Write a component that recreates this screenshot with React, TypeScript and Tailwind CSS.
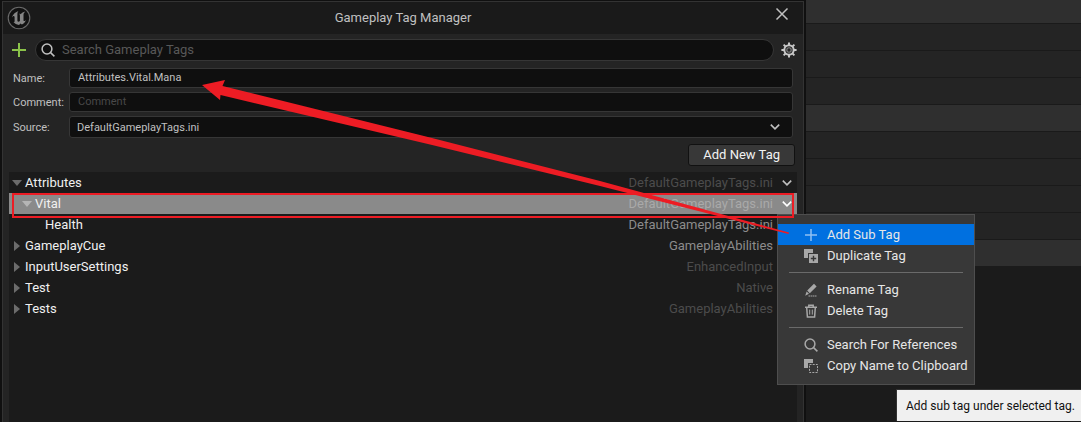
import type { ReactNode } from "react";

type Tag = {
  name: string;
  source: string;
  indent: string;
  arrow?: "open" | "closed";
  dim?: boolean;
  selected?: boolean;
  menu?: boolean;
};

const tags: Tag[] = [
  { name: "Attributes", source: "DefaultGameplayTags.ini", indent: "pl-0", arrow: "open", dim: true, menu: true },
  { name: "Vital", source: "DefaultGameplayTags.ini", indent: "pl-[10px]", arrow: "open", selected: true, menu: true },
  { name: "Health", source: "DefaultGameplayTags.ini", indent: "pl-5" },
  { name: "GameplayCue", source: "GameplayAbilities", indent: "pl-0", arrow: "closed" },
  { name: "InputUserSettings", source: "EnhancedInput", indent: "pl-0", arrow: "closed", dim: true },
  { name: "Test", source: "Native", indent: "pl-0", arrow: "closed", dim: true },
  { name: "Tests", source: "GameplayAbilities", indent: "pl-0", arrow: "closed", dim: true },
];

const backRows = [false, false, false, true, false, false, false, false, true];

function Chevron({ className }: { className?: string }) {
  return (
    <svg viewBox="0 0 12 8" className={`h-2 w-3 ${className ?? ""}`} fill="none" stroke="currentColor" strokeWidth="1.6">
      <path d="M1.8 1.6 6 5.8l4.2-4.2" />
    </svg>
  );
}

function Magnifier({ className }: { className: string }) {
  return (
    <svg viewBox="0 0 14 14" className={className} fill="none" stroke="currentColor" strokeWidth="1.5">
      <circle cx="6" cy="6" r="4.9" />
      <path d="m9.6 9.6 3.8 3.8" />
    </svg>
  );
}

function Gear() {
  const teeth = [0, 45, 90, 135, 180, 225, 270, 315];
  return (
    <svg viewBox="0 0 16 16" className="size-4 text-[#c8c8c8]" fill="none" stroke="currentColor">
      <circle cx="8" cy="8" r="4.7" strokeWidth="2" />
      <circle cx="8" cy="8" r="2.2" strokeWidth="1.1" className="text-[#808080]" />
      {teeth.map((a) => (
        <path key={a} d="M8 .4v2.8" strokeWidth="2" transform={`rotate(${a} 8 8)`} />
      ))}
    </svg>
  );
}

function UnrealLogo() {
  return (
    <svg viewBox="0 0 24 24" className="size-6">
      <circle cx="12" cy="12" r="10.8" fill="#111" stroke="#6a6a6a" strokeWidth="1.1" />
      <path
        fill="#858585"
        d="M11 5.2C8.3 6 5.8 8.3 4.8 11.7c.9-1.200 1.800-1.900 2.400-1.500.3.200.4.600.4 1.200v3.900c0 .7-.5.900-1.100.8 1.100 1.500 3.100 2.700 5.500 2.800l1.500-1.500 1.400 1.100c1.900-1 3.300-2.600 4-4.600-.8.800-1.500 1.200-2 1.200-.3-.1-.4-.3-.4-.8V8.800c0-1.200.9-2.500 1.800-3.200-2 .3-3.600 1.500-4.500 2.700-.4-.5-.9-.6-1.600-.6.500.4.700.9.700 1.500v5.700c-.5.500-1 .8-1.500.8-.8 0-1-.6-1-1.200V7.700c0-1.100.3-1.900 1-2.500Z"
      />
    </svg>
  );
}

const icons: Record<string, ReactNode> = {
  add: <path d="M7 1v12M1 7h12" stroke="currentColor" strokeWidth="1.5" />,
  duplicate: (
    <>
      <path d="M0 0h9v4H4v5H0z" fill="currentColor" />
      <path fillRule="evenodd" d="M5 5h9v9H5zM8.800 6.800v2h-2v1.400h2v2h1.400v-2h2V8.800h-2v-2z" fill="currentColor" />
    </>
  ),
  rename: (
    <>
      <path d="M3.200 7.600 10 .8l2.600 2.600-6.800 6.800zM2.600 8.400l2.400 2.400L1.200 12.800z" fill="currentColor" />
      <path d="M4.500 13h8.500" stroke="currentColor" strokeDasharray="1.500 .5" />
    </>
  ),
  remove: (
    <g fill="none" stroke="currentColor" strokeWidth="1.5">
      <path d="M1 3.200h12M4.800 3V1.200h4.400V3M2.700 3.500l.7 9.600h7.200l.7-9.600" />
      <path d="M5.700 5.600v5M8.300 5.600v5" strokeWidth="1" />
    </g>
  ),
  copy: (
    <>
      <path d="M0 0h9v4H4v5H0z" fill="currentColor" />
      <path d="M5.500 5.500h8v8h-8z" fill="none" stroke="currentColor" strokeDasharray="2 1.200" />
    </>
  ),
};

function MenuItem({ icon, label, active }: { icon: string; label: string; active?: boolean }) {
  return (
    <button
      type="button"
      role="menuitem"
      className={`flex h-[21px] w-full items-center gap-[9px] pl-[26px] text-left whitespace-nowrap text-[#e6e6e6] ${active ? "bg-[#0070e0]" : ""}`}
    >
      <span className={active ? "text-[#8fc0f2]" : "text-[#a8a8a8]"}>
        {icon === "search" ? (
          <Magnifier className="size-[14px]" />
        ) : (
          <svg viewBox="0 0 14 14" className="size-[14px]">
            {icons[icon]}
          </svg>
        )}
      </span>
      {label}
    </button>
  );
}

function Separator() {
  return <div role="separator" className="mx-[11px] my-[6px] h-px bg-[#6a6a6a]" />;
}

function TagRow({ tag }: { tag: Tag }) {
  const color = tag.selected ? "text-[#a9a9a9]" : tag.dim ? "text-[#4c4c4c]" : "text-[#8c8c8c]";
  return (
    <li className={`flex h-[21px] items-center pr-1 pl-[3px] ${tag.selected ? "bg-[#8a8a8a]" : ""}`}>
      <div className={`flex flex-1 items-center ${tag.indent}`}>
        <span className="flex w-[13px] items-center">
          {tag.arrow && (
            <svg viewBox="0 0 10 10" className={`size-[10px] ${tag.selected ? "text-[#b5b5b5]" : "text-[#6c6c6c]"}`} fill="currentColor">
              <path d={tag.arrow === "open" ? "M0 2h10L5 8z" : "M2 0v10l6-5z"} />
            </svg>
          )}
        </span>
        <span className="text-[#f0f0f0]">{tag.name}</span>
      </div>
      <span className={color}>{tag.source}</span>
      <span className="flex w-5 justify-end">
        {tag.menu && (
          <button type="button" aria-label={`${tag.name} options`} className={tag.selected ? "text-white" : "text-[#c0c0c0]"}>
            <Chevron />
          </button>
        )}
      </span>
    </li>
  );
}

const fieldBox = "min-w-0 flex-1 rounded-[3px] border border-[#363636] bg-[#0f0f0f]";

export default function App() {
  return (
    <div className="relative flex min-h-screen overflow-hidden bg-[#101010] pl-[2px] font-['Roboto',sans-serif] text-[13px] leading-4 text-[#c0c0c0]">
      <main className="mt-px flex min-w-0 flex-1 flex-col border border-b-0 border-[#333] bg-[#242424]">
        <header className="flex h-8 items-center bg-[#1a1a1a] pr-[14px] pl-1">
          <UnrealLogo />
          <h1 className="flex-1 text-center">Gameplay Tag Manager</h1>
          <button type="button" aria-label="Close" className="mb-2">
            <svg viewBox="0 0 14 14" className="size-[14px]" fill="none" stroke="currentColor" strokeWidth="1.5">
              <path d="m1.500 1.500 11 11m0-11-11 11" />
            </svg>
          </button>
        </header>

        <div className="mt-[5px] flex items-center pr-[6px] pl-[9px]">
          <button type="button" aria-label="Add tag" className="text-[#8bc34a]">
            <svg viewBox="0 0 14 14" className="size-[14px]" stroke="currentColor" strokeWidth="2">
              <path d="M7 0v14M0 7h14" />
            </svg>
          </button>
          <label className="mr-[7px] ml-[9px] flex h-[22px] flex-1 items-center gap-[7px] rounded-full border border-[#363636] bg-[#0f0f0f] pl-[5px]">
            <Magnifier className="size-[14px]" />
            <input
              type="search"
              aria-label="Search Gameplay Tags"
              placeholder="Search Gameplay Tags"
              className="min-w-0 flex-1 bg-transparent outline-none placeholder:text-[#585858]"
            />
          </label>
          <button type="button" aria-label="Settings">
            <Gear />
          </button>
        </div>

        <form className="mt-[7px] flex flex-col gap-1 px-[10px] text-[11px]">
          <div className="flex items-center">
            <label htmlFor="tag-name" className="w-14 pt-px">Name:</label>
            <input id="tag-name" type="text" defaultValue="Attributes.Vital.Mana" className={`${fieldBox} h-5 px-2 pb-[2px]`} />
          </div>
          <div className="flex items-center">
            <label htmlFor="tag-comment" className="w-14 pt-px">Comment:</label>
            <input id="tag-comment" type="text" placeholder="Comment" className={`${fieldBox} h-5 px-2 pb-[2px] placeholder:text-[#484848]`} />
          </div>
          <div className="flex items-center">
            <label htmlFor="tag-source" className="w-14 pt-px">Source:</label>
            <div className="relative flex min-w-0 flex-1">
              <select id="tag-source" className={`${fieldBox} h-[22px] appearance-none px-[7px] pt-px`}>
                <option>DefaultGameplayTags.ini</option>
              </select>
              <Chevron className="pointer-events-none absolute top-[7px] right-3" />
            </div>
          </div>
        </form>

        <div className="mt-[6px] flex justify-end pr-2">
          <button type="button" className="h-[22px] rounded-[3px] border border-[#111] bg-[#383838] px-[14px] text-[#f2f2f2]">
            Add New Tag
          </button>
        </div>

        <section className="mx-[6px] mt-[6px] flex-1 bg-[#1b1b1b]">
          <ul>
            {tags.map((tag) => (
              <TagRow key={tag.name} tag={tag} />
            ))}
          </ul>
        </section>
      </main>

      <aside className="w-[277px] border-l-2 border-[#101010] bg-[#1b1b1b]">
        <div className="h-[23px] bg-[#2f2f2f]" />
        {backRows.map((light, i) => (
          <div key={i} className={`h-[27px] border-t border-[#1a1a1a] ${light ? "bg-[#2f2f2f]" : "bg-[#242424]"}`} />
        ))}
      </aside>

      <div role="menu" className="absolute top-[214px] left-[777px] w-[198px] border border-[#4e4e4e] bg-[#383838] pt-[9px] pb-2">
        <MenuItem icon="add" label="Add Sub Tag" active />
        <MenuItem icon="duplicate" label="Duplicate Tag" />
        <Separator />
        <MenuItem icon="rename" label="Rename Tag" />
        <MenuItem icon="remove" label="Delete Tag" />
        <Separator />
        <MenuItem icon="search" label="Search For References" />
        <MenuItem icon="copy" label="Copy Name to Clipboard" />
      </div>

      <div role="tooltip" className="absolute top-[389px] left-[896px] flex h-8 w-[190px] items-center border-t border-l border-[#333] bg-[#f0f0f0] pl-[9px] text-[12px] whitespace-nowrap text-[#111]">
        Add sub tag under selected tag.
      </div>

      <svg viewBox="0 0 1081 422" className="pointer-events-none absolute top-0 left-0 h-[422px] w-[1081px]">
        <path d="M13 194H793V217H13z" fill="none" stroke="#ed1c24" strokeWidth="2" />
        <path d="M202 85 225 80 222.500 86 430 137.500 600 181 789 232.500 788.500 234 600 186 430 144.500 220.500 95 220 100z" fill="#ed1c24" />
      </svg>
    </div>
  );
}
